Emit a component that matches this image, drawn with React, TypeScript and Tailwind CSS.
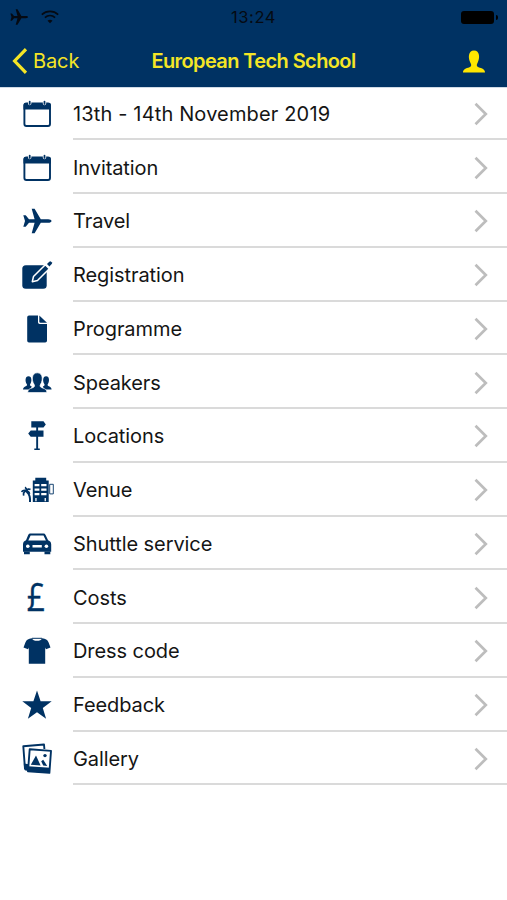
import type { ReactNode } from "react";

const NAVY = "#003263";

type IconProps = {
  children: ReactNode;
};

const Icon = ({ children }: IconProps) => (
  <svg viewBox="0 0 32 32" className="mt-[1px] size-8 shrink-0 overflow-visible" fill={NAVY} aria-hidden="true">
    {children}
  </svg>
);

const CalendarIcon = () => (
  <Icon>
    <rect x="3.4" y="5.4" width="25.6" height="22.6" rx="2" fill="none" stroke={NAVY} strokeWidth="1.9" />
    <path d="M2.500 11.6V7a2 2 0 0 1 2-2h23.400a2 2 0 0 1 2 2v4.600z" />
    <path d="M8.700 4.500v1M23.500 4.500v1" stroke="#fff" strokeWidth="3.400" strokeLinecap="round" />
    <path d="M8.700 3.600v2.300M23.500 3.600v2.300" stroke={NAVY} strokeWidth="1.800" strokeLinecap="round" />
  </Icon>
);

const planePath =
  "M30.500 16c0 1-1.500 1.800-3.300 1.800h-7.400L13.600 28.300h-2.900l2.900-10.500H8l-3.300 4H2.300L4 16 2.300 10.200h2.400l3.300 4h5.600L10.700 3.700h2.900l6.200 10.500h7.400c1.800 0 3.300.8 3.300 1.800z";

const PlaneIcon = () => (
  <Icon>
    <path d={planePath} />
  </Icon>
);

const EditIcon = () => (
  <Icon>
    <rect x="1.300" y="6.300" width="24.400" height="23.500" rx="3.500" />
    <path d="M11.300 22.700l1.200-5.200L24.300 5.700l4 4L16.500 21.500z" stroke="#fff" strokeWidth="1.500" strokeLinejoin="round" />
    <path d="M26 5l2.300-2.300a1.300 1.300 0 0 1 1.800 0l.6.600a1.300 1.300 0 0 1 0 1.800L28.400 7.400z" />
  </Icon>
);

const DocumentIcon = () => (
  <Icon>
    <path d="M8 2.500h9v6.700a1.700 1.700 0 0 0 1.700 1.700H26v16.800a1.800 1.800 0 0 1-1.800 1.800H8a1.800 1.800 0 0 1-1.800-1.800V4.300A1.800 1.800 0 0 1 8 2.500z" />
    <path d="M18.300 2.600L26 9.700h-6.500a1.200 1.200 0 0 1-1.200-1.200z" />
  </Icon>
);

const SpeakersIcon = () => (
  <Icon>
    <path d="M2 22.600c0-2.600 1.800-2.900 3.300-3.700.9-.5.900-1.200.4-2-1.700-2.500-1.800-7.700 1.800-7.700s3.500 5.200 1.800 7.700c-.5.800-.4 1.500.4 2l1.100.6L9.300 22.600z" />
    <path d="M30.600 22.600c0-2.600-1.800-2.900-3.300-3.700-.9-.5-.9-1.200-.4-2 1.700-2.500 1.800-7.700-1.800-7.700s-3.500 5.200-1.800 7.700c.5.800.4 1.500-.4 2l-1.100.6 1.500 3.100z" />
    <path
      d="M6.800 25.600c0-3.900 2.800-3.900 5.400-5.100 1.700-.8 1.600-2 .7-3.400-2.300-3.500-2.600-11.300 3.400-11.300s5.700 7.800 3.400 11.300c-.9 1.400-1 2.600.7 3.400 2.600 1.200 5.400 1.200 5.400 5.100z"
      stroke="#fff"
      strokeWidth=".7"
    />
  </Icon>
);

const SignpostIcon = () => (
  <Icon>
    <path d="M10.300 1.300h12.200l2.300 3.100-2.300 3.100H10.300zM22.500 10.400H9.700l-2.500 3.200 2.500 3.200h12.800z" />
    <path d="M15.200 7h1.900v22.200h-1.900zM13.300 28.600h5.500v1.400h-5.500z" />
  </Icon>
);

const HotelIcon = () => (
  <Icon>
    <path d="M14.300 3.800h10.900v2.700h2.500V28H11.800V6.500h2.500z" />
    <path
      d="M13.600 10h4.800v2.200h-4.800zm6.600 0h5.300v2.200h-5.300zm-6.600 4.500h4.800v2.200h-4.800zm6.600 0h5.300v2.200h-5.300zm-6.600 4.500h4.800v2.200h-4.800zm6.600 0h5.300v2.200h-5.300zm-5.900 5h1.300v3.200h-1.300zm9.300 0h1.300v3.200h-1.300z"
      fill="#fff"
    />
    <path d="M28.700 10.300h3.600v9.600h-3.600z" fill="none" stroke={NAVY} strokeWidth=".9" />
    <path d="M5.500 17c4 2 4.800 6 4.500 11H8c.3-4.500-.3-7.200-3-9.500z" />
    <path
      d="M5.300 17c-1.500-.9-3.300-.8-4.800.8M5.300 17c-2.200.6-3.200 2.200-2.600 4.600M5.300 17c.3-2-.1-3-1.300-3.700M5.300 17c1-2 2.600-2.400 4.200-1.500M5.300 17c2 .2 3 1.200 3.200 2.800"
      fill="none"
      stroke={NAVY}
      strokeWidth="1.700"
    />
  </Icon>
);

const CarIcon = () => (
  <Icon>
    <path
      fillRule="evenodd"
      d="M9.300 5.600h13.200a2.300 2.300 0 0 1 2.100 1.300l2.500 5.300c2 .8 3.100 2.100 3.100 4.300v7.200H2v-7.200c0-2.200 1-3.500 3-4.300l2.200-5.300a2.300 2.300 0 0 1 2.100-1.300zM9.600 7.400L7.300 12.400h17.600l-2.400-5zM11.500 17.100v2.300h9.300v-2.300z"
    />
    <circle cx="6.800" cy="18.200" r="1.800" fill="#fff" />
    <circle cx="25.400" cy="18.200" r="1.800" fill="#fff" />
    <path d="M3 23.500h5.800v2.800H3zM23.500 23.500h5.800v2.800h-5.800z" />
  </Icon>
);

const PoundIcon = () => (
  <span className="flex size-8 shrink-0 items-center justify-center">
    <span className="-mt-0.5 -ml-0.5 scale-x-[0.84] font-['Open_Sans',sans-serif] text-[38px] leading-none text-[#003263] [-webkit-text-stroke:0.3px_#003263]">
      £
    </span>
  </span>
);

const ShirtIcon = () => (
  <Icon>
    <path d="M10.800 3.300c1 3.400 9.400 3.400 10.400 0 3.500.6 5.100 1.400 6.300 4l2 5.100-4.500 1.900-.8-1.800v16.200H7.800V12.500L7 14.300l-4.500-1.900 2-5.100c1.200-2.600 2.800-3.400 6.300-4z" />
    <path d="M11 3.300h10" stroke={NAVY} strokeWidth="1" />
  </Icon>
);

const StarIcon = () => (
  <Icon>
    <path d="M16 1.600l3.600 10.600h11.100l-8.900 6.700 3.300 10.900-9.100-6.600-9.100 6.600 3.300-10.900-8.900-6.700h11.100z" />
  </Icon>
);

const GalleryIcon = () => (
  <Icon>
    <path d="M4 26L2.300 3.200 23 1.500l.4 4.500" fill="none" stroke={NAVY} strokeWidth="1.900" strokeLinejoin="round" />
    <path d="M2.800 20.500l5 .8v6.700l-3.200-.5a1.500 1.500 0 0 1-1.400-1.400z" />
    <path d="M8.700 6.300l21.300 1.600-1.600 22L7 28.200z" fill="#fff" stroke={NAVY} strokeWidth="1.900" strokeLinejoin="round" />
    <path d="M7.200 23.300l21.800 1.500-.5 5.200L6.500 28.500z" />
    <path d="M9.800 21.800l5.200-9.200 4.600 9.900zM20.200 18.200l2-1.500 4 6.200-4-.3z" />
    <circle cx="24" cy="12.600" r="1.700" />
  </Icon>
);

const menuItems = [
  { label: "13th - 14th November 2019", icon: <CalendarIcon /> },
  { label: "Invitation", icon: <CalendarIcon /> },
  { label: "Travel", icon: <PlaneIcon /> },
  { label: "Registration", icon: <EditIcon /> },
  { label: "Programme", icon: <DocumentIcon /> },
  { label: "Speakers", icon: <SpeakersIcon /> },
  { label: "Locations", icon: <SignpostIcon /> },
  { label: "Venue", icon: <HotelIcon /> },
  { label: "Shuttle service", icon: <CarIcon /> },
  { label: "Costs", icon: <PoundIcon /> },
  { label: "Dress code", icon: <ShirtIcon /> },
  { label: "Feedback", icon: <StarIcon /> },
  { label: "Gallery", icon: <GalleryIcon /> },
];

const StatusBar = () => (
  <div className="grid h-[35px] grid-cols-3 items-center px-[9px] text-[#050a12]">
    <div className="flex items-center gap-3">
      <svg viewBox="0 0 32 32" className="-mt-0.5 size-5" fill="currentColor" aria-hidden="true">
        <path d={planePath} />
      </svg>
      <svg viewBox="0 0 18 14" className="-mt-0.5 h-[14px] w-[18px]" fill="none" stroke="currentColor" aria-hidden="true">
        <path d="M.8 4.600c4.700-4.300 11.700-4.300 16.400 0M3.900 7.700c3-2.700 7.200-2.700 10.200 0" strokeWidth="1.700" />
        <path d="M9 13.200l-2.500-2.500c1.400-1.200 3.600-1.200 5 0z" fill="currentColor" stroke="none" />
      </svg>
    </div>
    <span className="text-center text-[16.500px] tracking-[0.6px]">13:24</span>
    <div className="flex items-center justify-end gap-[2px]">
      <span className="h-[13px] w-[33px] rounded-[3px] bg-black" />
      <span className="h-[5px] w-[2px] rounded-r-full bg-black" />
    </div>
  </div>
);

const NavBar = () => (
  <div className="grid h-[52px] grid-cols-[1fr_auto_1fr] items-center px-3 text-[#f4e526]">
    <button type="button" className="flex items-center gap-1.5 text-left">
      <svg viewBox="0 0 15 26" className="h-[26px] w-[15px]" fill="none" stroke="currentColor" strokeWidth="3.200" aria-hidden="true">
        <path d="M14 1.200L2.600 13 14 24.800" />
      </svg>
      <span className="text-[20px] tracking-[-0.1px]">Back</span>
    </button>
    <h1 className="text-[20px] font-semibold tracking-[-0.6px]">European Tech School</h1>
    <button type="button" className="mr-2.5 justify-self-end" aria-label="Profile">
      <svg viewBox="0 0 22 23" className="h-[23px] w-[22px]" fill="#ffe600" aria-hidden="true">
        <path d="M0 22.500c0-3.300 3-4 6.500-5.200 2.200-.9 2-2.600 1-4.300C4.900 8.300 5 .5 11 .5S17.100 8.300 14.500 13c-1 1.700-1.200 3.400 1 4.300 3.500 1.200 6.500 1.900 6.500 5.200z" />
      </svg>
    </button>
  </div>
);

type MenuRowProps = {
  label: string;
  icon: ReactNode;
};

const MenuRow = ({ label, icon }: MenuRowProps) => (
  <li className="flex h-[53.750px] items-center gap-5 pl-[21px]">
    {icon}
    <div className="flex h-full flex-1 items-center justify-between border-b-2 border-[#dadada] pt-[3px] pr-[19px]">
      <span className="text-[20px] tracking-[-0.08px] text-[#151515]">{label}</span>
      <svg viewBox="0 0 14 24" className="h-6 w-[14px]" fill="none" stroke="#bdbdbd" strokeWidth="2.700" aria-hidden="true">
        <path d="M1.500 1.800L11.800 12 1.500 22.200" />
      </svg>
    </div>
  </li>
);

const App = () => (
  <div className="min-h-[900px] w-full bg-white font-[Inter,sans-serif]">
    <header className="h-[88px] border-b border-[#cfdae6] bg-[#003263]">
      <StatusBar />
      <NavBar />
    </header>
    <ul className="-mt-[1.500px] [&>li:first-child_span]:tracking-[0.15px]">
      {menuItems.map((item) => (
        <MenuRow key={item.label} label={item.label} icon={item.icon} />
      ))}
    </ul>
  </div>
);

export default App;
